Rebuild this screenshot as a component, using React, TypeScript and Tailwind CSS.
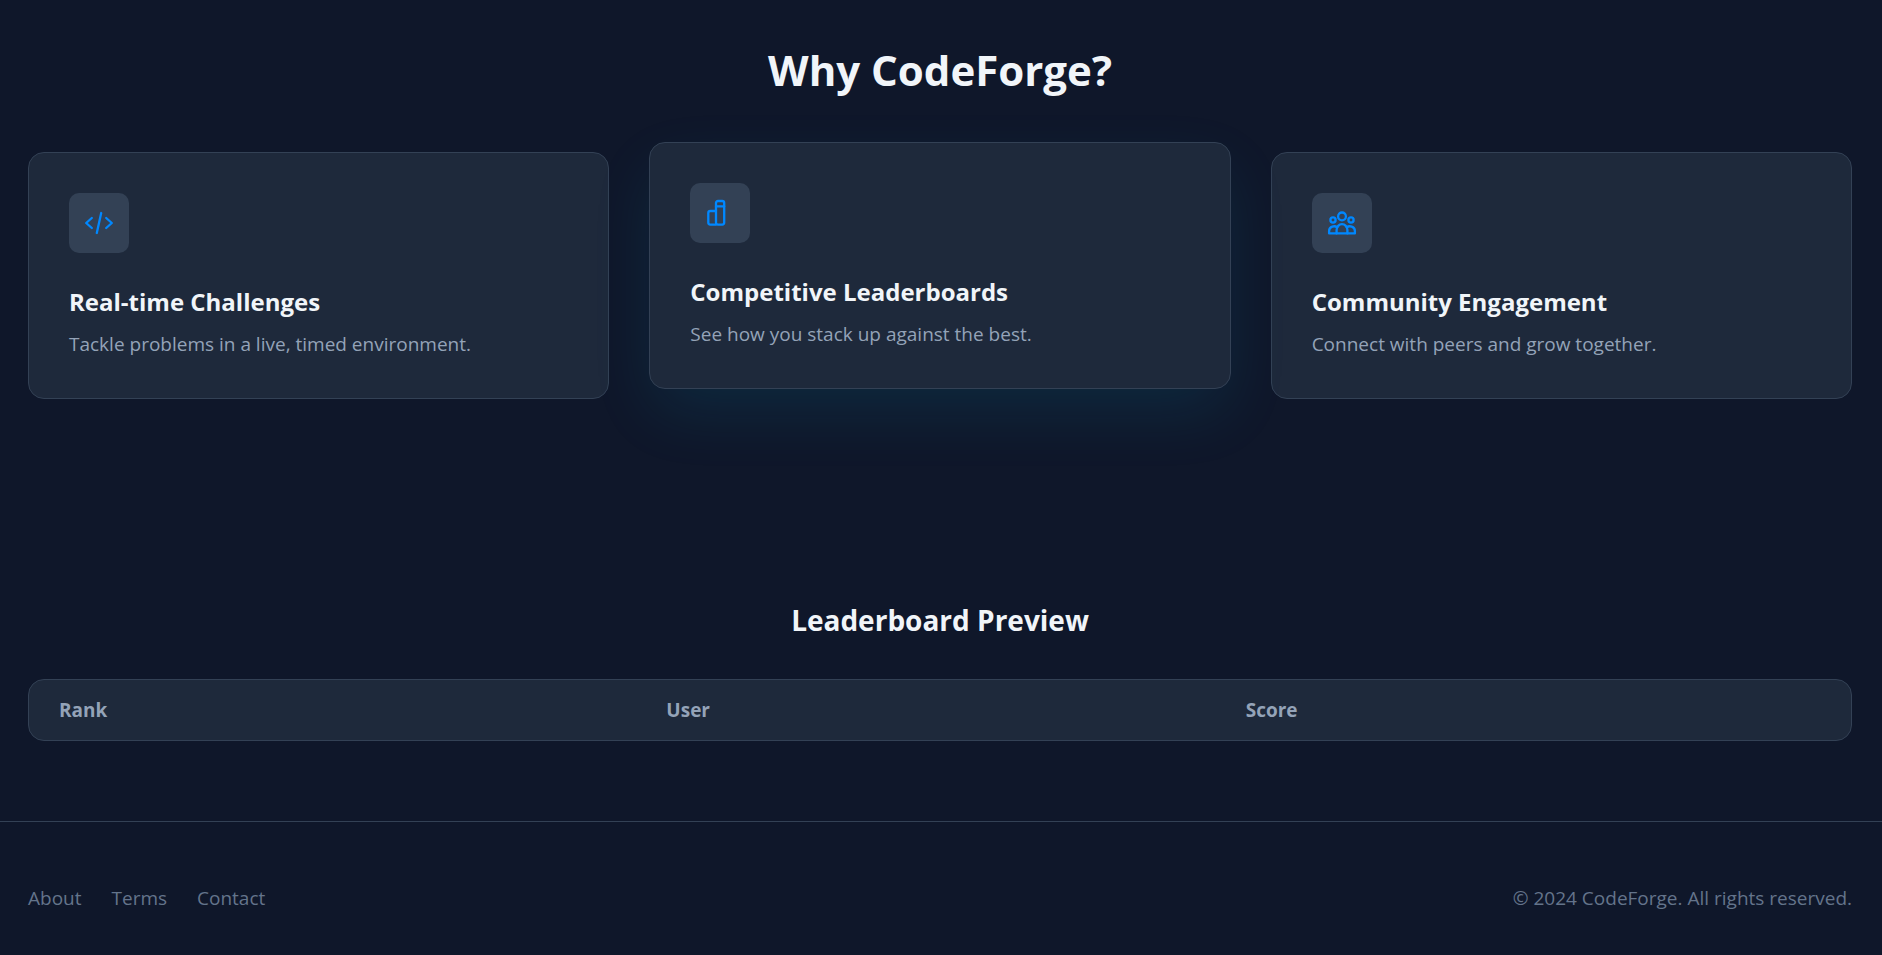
import React from "react";

const features = [
  {
    title: "Real-time Challenges",
    text: "Tackle problems in a live, timed environment.",
    raised: false,
    icon: (
      <>
        <path d="M7.8 10 2.2 15l5.6 5" />
        <path d="m22.2 10 5.6 5-5.6 5" />
        <path d="M17.2 5 12.8 25" />
      </>
    ),
  },
  {
    title: "Competitive Leaderboards",
    text: "See how you stack up against the best.",
    raised: true,
    icon: (
      <>
        <path d="M11 13H5.3a2 2 0 0 0-2 2v9.6a2 2 0 0 0 2 2H11" />
        <rect x="11" y="3" width="8.2" height="23.6" rx="2" />
        <path d="M11 8.4h8.2" />
      </>
    ),
  },
  {
    title: "Community Engagement",
    text: "Connect with peers and grow together.",
    raised: false,
    icon: (
      <>
        <circle cx="15" cy="8.4" r="3.9" />
        <circle cx="6" cy="12" r="2.6" />
        <circle cx="24" cy="12" r="2.6" />
        <path d="M9.6 25.4v-3.3a5.4 6 0 0 1 10.8 0v3.3" />
        <path d="M10.2 19.4C8 17.4 2.1 18 2.1 23v2.4h25.8V23c0-5-5.9-5.6-8.1-3.6" />
      </>
    ),
  },
];

export default function App() {
  return (
    <div className="min-h-screen bg-[#0f172a] font-['Open_Sans','Segoe_UI',sans-serif] text-[19px] leading-8 text-slate-100">
      <main className="pt-10 pr-[30px] pl-7">
        <section>
          <h2 className="text-center text-[42px] leading-[60px] font-bold">Why CodeForge?</h2>
          <div className="mt-[52px] grid grid-cols-3 gap-10">
            {features.map((f) => (
              <article
                key={f.title}
                className={
                  f.raised
                    ? "-translate-y-2.5 rounded-2xl border border-[#334155] bg-[#1e293b] p-10 shadow-[0_25px_65px_-5px_rgba(10,170,215,0.12)]"
                    : "rounded-2xl border border-[#334155] bg-[#1e293b] p-10"
                }
              >
                <div className="flex size-[60px] items-center justify-center rounded-[10px] bg-[#334155]">
                  <svg viewBox="0 0 30 30" className="size-[30px] fill-none stroke-[#0088ff] stroke-[2.3]" strokeLinecap="round" strokeLinejoin="round" aria-hidden="true">
                    {f.icon}
                  </svg>
                </div>
                <h3 className="mt-[30px] text-2xl leading-[38px] font-bold">{f.title}</h3>
                <p className="mt-[9px] leading-7 text-[#94a3b8]">{f.text}</p>
              </article>
            ))}
          </div>
        </section>
        <section className="mt-[200px]">
          <h2 className="text-center text-[28px] leading-[42px] font-bold">Leaderboard Preview</h2>
          <div className="mt-[38px] overflow-hidden rounded-2xl border border-[#334155] bg-[#1e293b]">
            <table className="w-full table-fixed text-left text-[#94a3b8]">
              <thead>
                <tr>
                  <th className="w-1/3 px-[30px] py-3.5 font-bold">Rank</th>
                  <th className="w-[31.8%] px-[30px] py-3.5 font-bold">User</th>
                  <th className="px-[30px] py-3.5 font-bold">Score</th>
                </tr>
              </thead>
            </table>
          </div>
        </section>
      </main>
      <footer className="mt-20 flex items-center justify-between border-t border-[#334155] py-[60px] pr-[30px] pl-7 text-[#64748b]">
        <nav className="flex gap-[30px]">
          <a href="#about">About</a>
          <a href="#terms">Terms</a>
          <a href="#contact">Contact</a>
        </nav>
        <p>© 2024 CodeForge. All rights reserved.</p>
      </footer>
    </div>
  );
}
